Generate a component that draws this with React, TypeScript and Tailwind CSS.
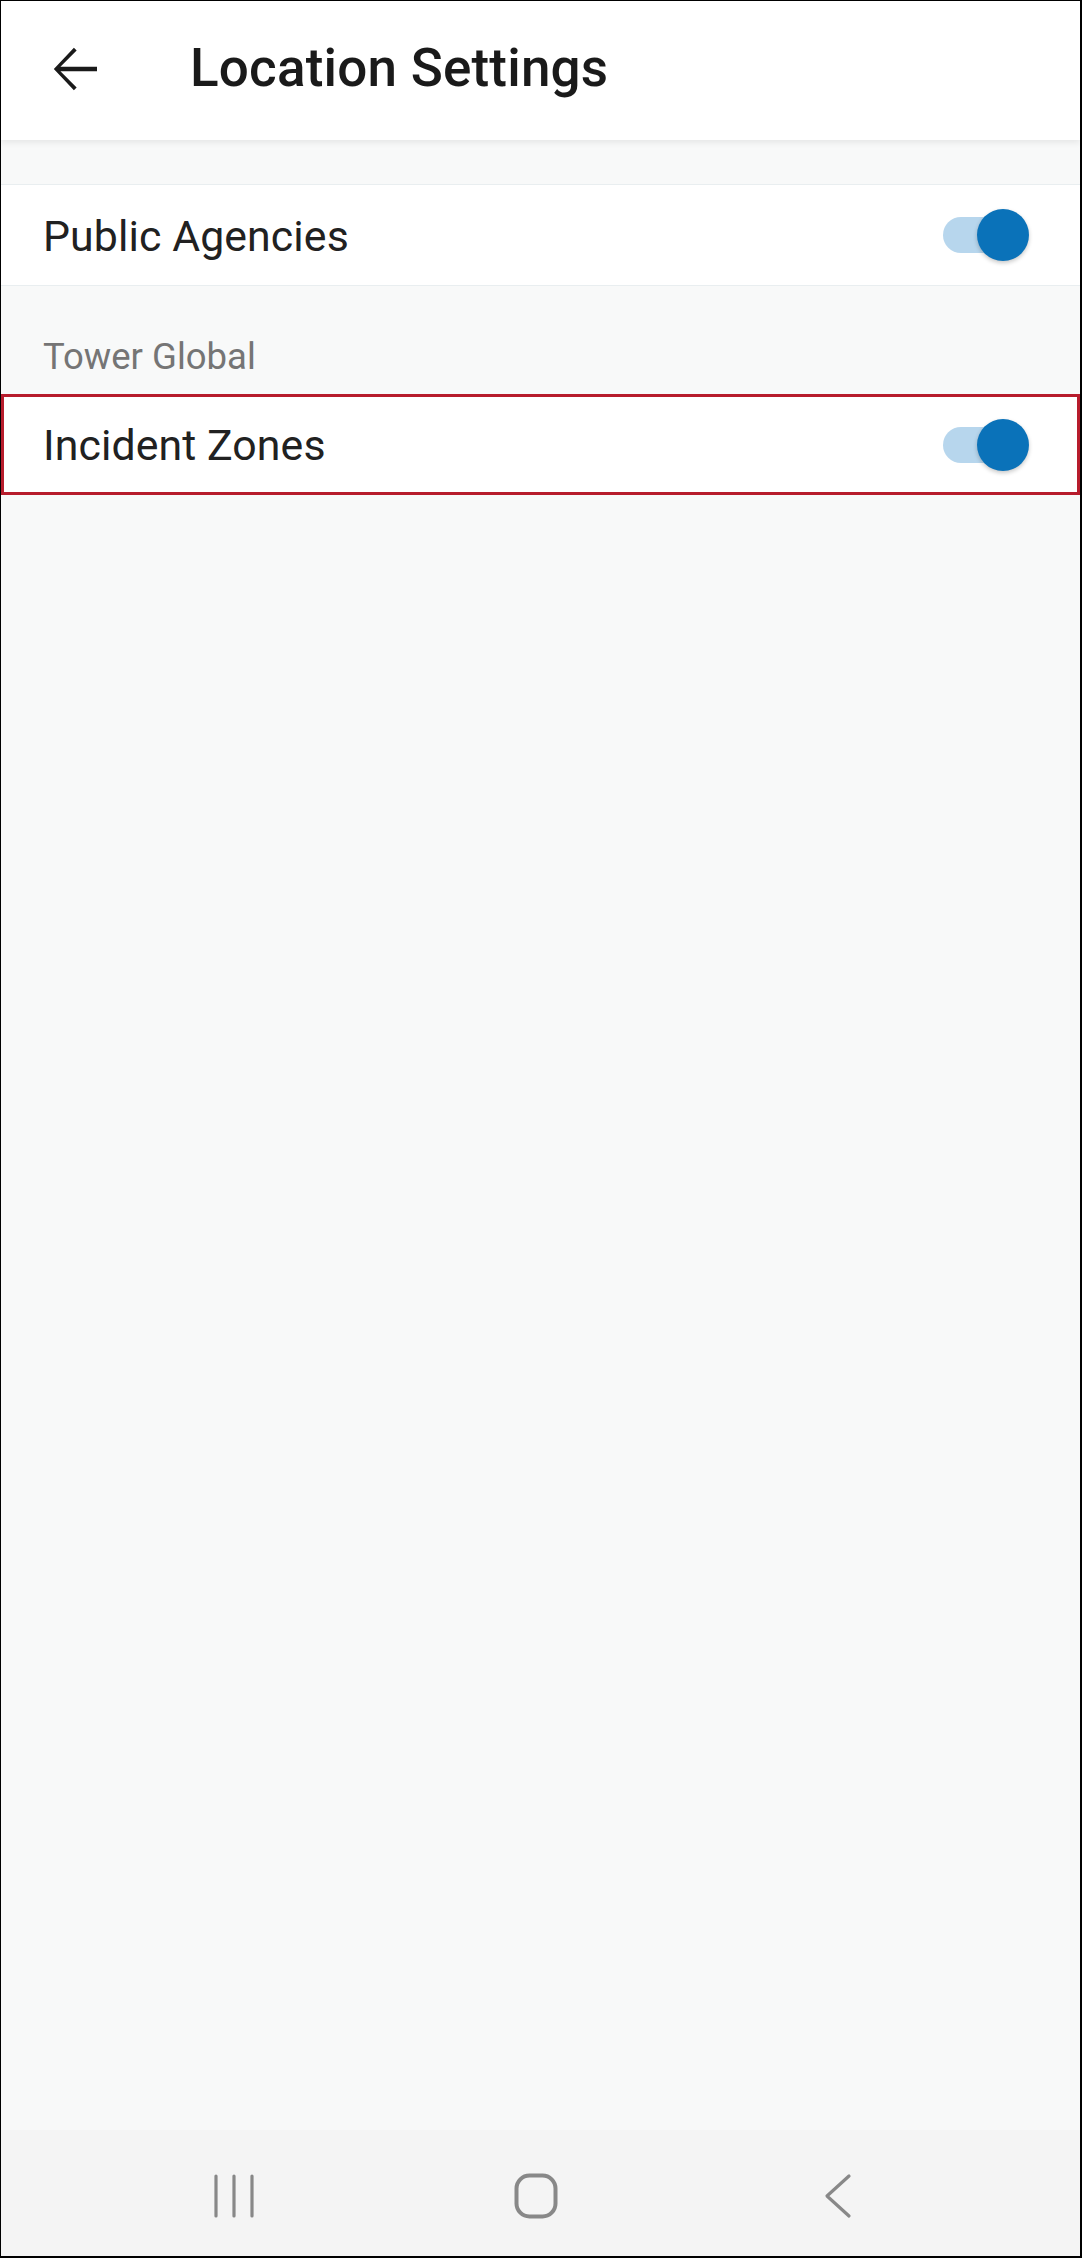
import React from "react";

function Toggle() {
  return (
    <div className="relative w-[86px] h-[52px] flex items-center">
      <div className="absolute left-0 w-[74px] h-[36px] rounded-full bg-[#b7d6ed]" />
      <div className="absolute right-0 size-[52px] rounded-full bg-[#0a72b9] shadow-[0_2px_4px_rgba(0,0,0,0.22)]" />
    </div>
  );
}

function SettingRow({ label, outlined }: { label: string; outlined?: boolean }) {
  return (
    <div
      className={
        outlined
          ? "h-[101px] flex items-center justify-between bg-white border-[3px] border-[#b71c2c] pl-[39px] pr-[48px]"
          : "h-[102px] flex items-center justify-between bg-white border-y border-[#e9eef0] pl-[42px] pr-[51px]"
      }
    >
      <span className="text-[42.8px] text-[#212121] tracking-[0.1px] mt-[2px]">{label}</span>
      <Toggle />
    </div>
  );
}

export default function App() {
  return (
    <div
      className="w-[1082px] h-[2258px] flex flex-col border-l border-t border-r-2 border-b-2 border-black bg-[#f8f9f9]"
      style={{ fontFamily: "Roboto, 'Noto Sans', sans-serif" }}
    >
      {/* Header */}
      <div className="relative z-10 h-[139px] shrink-0 flex items-center bg-white shadow-[0_3px_6px_rgba(0,0,0,0.07)] pl-[41px]">
        <svg width="66" height="66" viewBox="0 0 24 24" className="text-[#1a1a1a] -mt-[3px]">
          <path
            fill="currentColor"
            d="M20 11.2H6.7l5.9-5.9-1-1L4.3 12l7.3 7.7 1-1-5.9-5.9H20z"
          />
        </svg>
        <h1 className="ml-[82px] text-[53px] font-medium text-[#1a1a1a] tracking-[0.2px] -mt-[4px]">
          Location Settings
        </h1>
      </div>

      {/* Content */}
      <div className="flex-1 pt-[44px]">
        <SettingRow label="Public Agencies" />
        <div className="h-[108px] flex items-center pl-[42px] pt-[35px]">
          <span className="text-[36.5px] text-[#757575]">Tower Global</span>
        </div>
        <SettingRow label="Incident Zones" outlined />
      </div>

      {/* System nav bar */}
      <div className="h-[126px] shrink-0 flex items-center bg-[#f4f4f4] pl-[193px] gap-[222px] pt-[6px]">
        <div className="w-[80px] flex justify-center">
          <svg width="48" height="48" viewBox="0 0 48 48" fill="none" stroke="#888888" strokeWidth="3.2" strokeLinecap="round">
            <line x1="6" y1="4" x2="6" y2="44" />
            <line x1="24" y1="4" x2="24" y2="44" />
            <line x1="42" y1="4" x2="42" y2="44" />
          </svg>
        </div>
        <div className="w-[80px] flex justify-center">
          <svg width="48" height="48" viewBox="0 0 48 48" fill="none" stroke="#888888" strokeWidth="4">
            <rect x="4.5" y="3.5" width="39" height="41" rx="13" />
          </svg>
        </div>
        <div className="w-[80px] flex justify-center">
          <svg width="30" height="48" viewBox="0 0 30 48" fill="none" stroke="#888888" strokeWidth="3.2" strokeLinecap="round" strokeLinejoin="round">
            <polyline points="26,4 4,24 26,44" />
          </svg>
        </div>
      </div>
    </div>
  );
}
